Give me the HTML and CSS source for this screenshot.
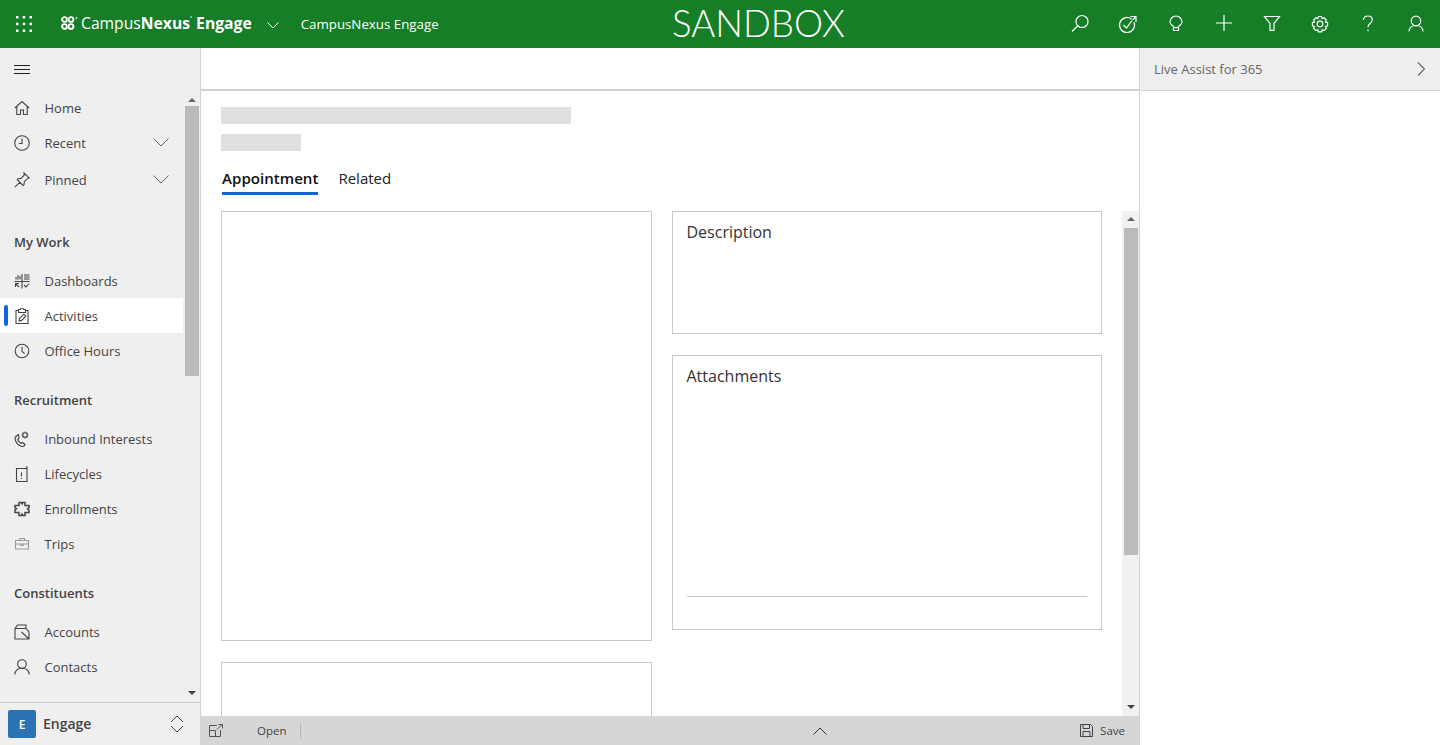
FILE: index.html
```html
<!DOCTYPE html>
<html lang="en">
<head>
    <meta charset="UTF-8">
    <meta name="viewport" content="width=device-width, initial-scale=1.0">
    <title>CampusNexus Engage</title>
    <link rel="stylesheet" href="styles.css">
</head>
<body>
    <header class="topbar">
        <svg class="waffle" width="16" height="16" viewBox="0 0 16 16" fill="#fff">
            <rect x="0" y="0" width="2.500" height="2.500"/><rect x="6.700" y="0" width="2.500" height="2.500"/><rect x="13.500" y="0" width="2.500" height="2.500"/>
            <rect x="0" y="6.700" width="2.500" height="2.500"/><rect x="6.700" y="6.700" width="2.500" height="2.500"/><rect x="13.500" y="6.700" width="2.500" height="2.500"/>
            <rect x="0" y="13.500" width="2.500" height="2.500"/><rect x="6.700" y="13.500" width="2.500" height="2.500"/><rect x="13.500" y="13.500" width="2.500" height="2.500"/>
        </svg>
        <svg class="logo-mark" width="17" height="14" viewBox="0 0 17 14" fill="none" stroke="#fff" stroke-width="1.900">
            <circle cx="3.500" cy="3.500" r="2.400"/><circle cx="10" cy="3.500" r="2.400"/><circle cx="3.500" cy="10.500" r="2.400"/><circle cx="10" cy="10.500" r="2.400"/>
            <circle cx="15.500" cy="2" r="0.600" stroke-width="1"/>
        </svg>
        <span class="logo-text">Campus<b>Nexus</b><sup>'</sup> <b>Engage</b></span>
        <svg class="logo-chevron" width="12" height="7" viewBox="0 0 12 7" fill="none" stroke="#fff"><path d="M.5.5 6 6l5.500-5.500"/></svg>
        <span class="app-name">CampusNexus Engage</span>
        <span class="sandbox">SANDBOX</span>
        <nav class="top-actions">
            <svg width="48" height="48" viewBox="0 0 48 48"><circle cx="26" cy="21.500" r="6"/><path d="M21.800 25.800 16 31.500"/></svg>
            <svg width="48" height="48" viewBox="0 0 48 48"><path d="M27.500 19A7.500 7.500 0 1 0 30 22.300"/><path d="M19.500 25l3 3 5.500-7.500"/><path d="M26.500 16.500H32V22M32 16.500l-3.500 3.500"/></svg>
            <svg width="48" height="48" viewBox="0 0 48 48"><path d="M21.500 30.500V27c0-1.300-3.500-2-3.500-5a6 6 0 0 1 12 0c0 3-3.500 3.700-3.500 5v3.500z"/><path d="M21.500 27.500h5"/></svg>
            <svg width="48" height="48" viewBox="0 0 48 48"><path d="M24 15v16M16 23h16"/></svg>
            <svg width="48" height="48" viewBox="0 0 48 48"><path d="M16.500 16.500h15L26 23.500v6.800h-4v-6.800z"/></svg>
            <svg width="48" height="48" viewBox="0 0 48 48"><circle cx="24" cy="24" r="2.800"/><path d="M22.400 16.500h3.200l.5 2.100 2-.8 2.300 2.300-.9 1.900 2.100.6v3.200l-2.100.6.900 1.900-2.300 2.300-2-.8-.5 2.100h-3.200l-.5-2.100-2 .8-2.300-2.300.9-1.900-2.100-.6v-3.200l2.100-.6-.9-1.900 2.300-2.300 2 .8z"/></svg>
            <svg width="48" height="48" viewBox="0 0 48 48"><path d="M19.500 20c0-2.500 2-4 4.500-4s4.300 1.600 4.300 3.800c0 3.500-4.300 3.500-4.300 7.500"/><path d="M24 29.500v1.800"/></svg>
            <svg width="48" height="48" viewBox="0 0 48 48"><circle cx="24" cy="21" r="4.800"/><path d="M17 31.500c.3-4 3-6 7-6s6.700 2 7 6"/></svg>
        </nav>
    </header>

    <div class="shell">
        <aside class="sidebar">
            <div class="sidebar-top">
                <svg width="16" height="10" viewBox="0 0 16 10" stroke="#222"><path d="M0 .5h16M0 4.500h16M0 8.500h16"/></svg>
            </div>
            <div class="sidebar-scroll">
                <div class="nav-list">
                    <a class="nav-item">
                        <svg class="nav-icon" viewBox="0 0 16 16"><path d="M.8 8 8 1.500 15.200 8M2.800 6.500v8h3.700V10h3v4.500h3.700v-8"/></svg>
                        <span>Home</span>
                    </a>
                    <a class="nav-item">
                        <svg class="nav-icon" viewBox="0 0 16 16"><circle cx="8" cy="8" r="7.300"/><path d="M8 3.500V8.500H4.800"/></svg>
                        <span>Recent</span>
                        <svg class="nav-chevron" width="16" height="9" viewBox="0 0 16 9"><path d="M.5.500 8 8l7.500-7.500"/></svg>
                    </a>
                    <a class="nav-item nav-item-tall">
                        <svg class="nav-icon" viewBox="0 0 16 16"><path d="M10 .8l5.200 5.200-1.600.4-3.300 3.300-.3 3.100-1 .7L3.200 7.700l.7-1 3.100-.3 3.300-3.300zM5.700 10.300.8 15.200"/></svg>
                        <span>Pinned</span>
                        <svg class="nav-chevron" width="16" height="9" viewBox="0 0 16 9"><path d="M.5.500 8 8l7.500-7.500"/></svg>
                    </a>

                    <h3 class="nav-heading nav-heading-first">My Work</h3>
                    <a class="nav-item">
                        <svg class="nav-icon" viewBox="0 0 16 16"><path d="M.5 8.500h15M8 1v14.500M2 6.500V4M4 6.500V2M6 6.500V3M10 2h5.500M10 4h5.500M10 6h5.500M1.500 10.500l3.500 3.500M1.500 14v-3.500H5M10 12l2 2 3-3.500"/></svg>
                        <span>Dashboards</span>
                    </a>
                    <a class="nav-item active">
                        <svg class="nav-icon" viewBox="0 0 16 16"><path d="M4.500 2.500H2v13h12v-13h-2.500M4.500 1.500h2a1.500 1.500 0 0 1 3 0h2V4.500h-7zM5 13l.6-2.600 4.200-4.200 2 2-4.200 4.200z"/></svg>
                        <span>Activities</span>
                    </a>
                    <a class="nav-item">
                        <svg class="nav-icon" viewBox="0 0 16 16"><circle cx="8" cy="8" r="6.800"/><path d="M8 3.800V8.500l2.600 2"/></svg>
                        <span>Office Hours</span>
                    </a>

                    <h3 class="nav-heading">Recruitment</h3>
                    <a class="nav-item">
                        <svg class="nav-icon" viewBox="0 0 16 16"><path d="M4.500 3.500C1.500 5 .5 7 1.500 9.500c1 2.800 3.300 5 6 5.800 1.500.4 3-.3 3.500-1.800l-2.500-2-1.500.8c-1.500-.7-2.800-2.200-3.300-3.800l1.300-1.200z"/><circle cx="11" cy="4" r="2.300"/><path d="M11 .5v1M11 6.500v1M7.500 4h1M13.500 4h1M8.600 1.600l.7.700M12.700 5.700l.7.700M8.600 6.400l.7-.7M12.700 2.300l.7-.7"/></svg>
                        <span>Inbound Interests</span>
                    </a>
                    <a class="nav-item">
                        <svg class="nav-icon" viewBox="0 0 16 16"><path d="M12.500 2.500H2.500v13h10.500v-15zM7.500 6.500v4M7.500 12v1"/></svg>
                        <span>Lifecycles</span>
                    </a>
                    <a class="nav-item nav-item-bold">
                        <svg class="nav-icon" viewBox="0 0 16 16"><path d="M5 1.500h2.200L8 3l.8-1.500H11v3h4v2.200L13.500 7.800 15 9v2.500h-4v3H8.800L8 13l-.8 1.500H5v-3H1V9l1.500-1.200L1 6.700V4.500h4z"/></svg>
                        <span>Enrollments</span>
                    </a>
                    <a class="nav-item nav-item-light">
                        <svg class="nav-icon" viewBox="0 0 16 16"><path d="M1.500 4.500h13v8.500h-13zM5.500 4.500v-2h5v2M1.500 8h13M7 8v1.500h2V8"/></svg>
                        <span>Trips</span>
                    </a>

                    <h3 class="nav-heading">Constituents</h3>
                    <a class="nav-item">
                        <svg class="nav-icon" viewBox="0 0 16 16"><path d="M1 15V4.500h11L15 8v7zM1 4.500 3.500 1H12v3.500M1 15h14M7.500 8 15 15"/></svg>
                        <span>Accounts</span>
                    </a>
                    <a class="nav-item">
                        <svg class="nav-icon" viewBox="0 0 16 16"><circle cx="8" cy="5" r="4.300"/><path d="M.8 15.500c.4-4 3.200-6.200 7.200-6.200s6.800 2.200 7.200 6.200"/></svg>
                        <span>Contacts</span>
                    </a>
                </div>
                <div class="scrollbar">
                    <span class="arrow arrow-up"></span>
                    <div class="thumb"></div>
                    <span class="arrow arrow-down"></span>
                </div>
            </div>
            <div class="area-switch">
                <span class="area-tile">E</span>
                <span class="area-name">Engage</span>
                <svg width="14" height="18" viewBox="0 0 14 18" fill="none" stroke="#444"><path d="M1 7 7 1l6 6M1 11l6 6 6-6"/></svg>
            </div>
        </aside>

        <main class="content">
            <div class="command-bar"></div>
            <div class="form-head">
                <div class="skeleton skeleton-title"></div>
                <div class="skeleton skeleton-sub"></div>
                <div class="tabs">
                    <span class="tab tab-active">Appointment</span>
                    <span class="tab">Related</span>
                </div>
            </div>
            <div class="form-body">
                <div class="form-grid">
                    <div class="form-col">
                        <section class="card card-main"></section>
                        <section class="card card-next"></section>
                    </div>
                    <div class="form-col">
                        <section class="card card-desc"><h2>Description</h2></section>
                        <section class="card card-attach">
                            <h2>Attachments</h2>
                            <div class="attach-rule"></div>
                        </section>
                    </div>
                </div>
                <div class="scrollbar form-scrollbar">
                    <span class="arrow arrow-up"></span>
                    <div class="thumb"></div>
                    <span class="arrow arrow-down"></span>
                </div>
            </div>
            <footer class="status-bar">
                <svg class="status-pop" width="14" height="13" viewBox="0 0 14 13" fill="none" stroke="#555"><path d="M8 1.500H.5v11h11V6M.5 6.500h6v6M8 5.500l5-5M9.500.5h4v4"/></svg>
                <span class="status-open">Open</span>
                <span class="status-sep"></span>
                <svg class="status-up" width="14" height="8" viewBox="0 0 14 8" fill="none" stroke="#333"><path d="M.5 7.500 7 1l6.500 6.500"/></svg>
                <svg class="status-save" width="13" height="13" viewBox="0 0 13 13" fill="none" stroke="#444"><path d="M.5.500h10l2 2v10H.5zM3 .5v4h6.500v-4M3 12.500V7.500h7v5"/></svg>
                <span class="status-label">Save</span>
            </footer>
        </main>

        <aside class="assist">
            <div class="assist-head">
                <span>Live Assist for 365</span>
                <svg width="8" height="14" viewBox="0 0 8 14" fill="none" stroke="#666" stroke-width="1.200"><path d="M1 .5 7.500 7 1 13.500"/></svg>
            </div>
        </aside>
    </div>
</body>
</html>
```

FILE: styles.css
```css
:root {
    --green: #157e27;
    --panel: #efefef;
    --line: #d2d2d2;
    --blue: #0f66dc;
    --text: #3b3b3b;
}
* {
    box-sizing: border-box;
}
html, body {
    height: 100%;
}
body {
    margin: 0;
    overflow: hidden;
    display: flex;
    flex-direction: column;
    font-family: "Open Sans", "Noto Sans", sans-serif;
    font-size: 13px;
    color: var(--text);
    background-color: #fff;
}

/* Top bar */
.topbar {
    position: relative;
    flex: 0 0 48px;
    display: flex;
    align-items: center;
    background-color: var(--green);
    color: #fff;
}
.waffle {
    margin-left: 16px;
}
.logo-mark {
    margin-left: 29px;
    margin-top: -3px;
}
.logo-text {
    margin-left: 3px;
    margin-top: -3px;
    font-size: 15.700px;
    white-space: nowrap;
}
.logo-text sup {
    font-size: 9px;
    line-height: 0;
}
.logo-chevron {
    margin-left: 15px;
    margin-top: 3px;
}
.app-name {
    margin-left: 22px;
    font-size: 13.300px;
    white-space: nowrap;
}
.sandbox {
    position: absolute;
    left: 672px;
    top: -1px;
    font-family: "Lato", sans-serif;
    font-weight: 300;
    font-size: 36.700px;
    line-height: 48px;
}
.top-actions {
    margin-left: auto;
    display: flex;
}
.top-actions svg {
    display: block;
    fill: none;
    stroke: #fff;
    stroke-width: 1.200;
}

/* Page shell */
.shell {
    flex: 1;
    min-height: 0;
    display: flex;
}

/* Sidebar */
.sidebar {
    flex: 0 0 201px;
    display: flex;
    flex-direction: column;
    background-color: var(--panel);
    border-right: 1px solid var(--line);
}
.sidebar-top {
    flex: 0 0 42px;
    display: flex;
    align-items: center;
    padding: 2px 0 0 14px;
}
.sidebar-scroll {
    flex: 1;
    min-height: 0;
    display: flex;
}
.nav-list {
    flex: 1;
    min-width: 0;
    margin-right: 1px;
}
.nav-item {
    position: relative;
    display: flex;
    align-items: center;
    height: 35px;
    padding: 0 14px 0 14px;
    font-size: 13px;
    color: #444;
}
.nav-item span {
    margin-left: 0.500px;
}
.nav-item-tall {
    height: 39px;
}
.nav-item.active {
    background-color: #fff;
}
.nav-item.active::before {
    content: "";
    position: absolute;
    left: 4px;
    top: 7px;
    bottom: 7px;
    width: 4px;
    border-radius: 2px;
    background-color: var(--blue);
}
.nav-icon {
    flex: 0 0 16px;
    width: 16px;
    height: 16px;
    margin-right: 14px;
    fill: none;
    stroke: #444;
    stroke-width: 1.100;
}
.nav-item-light .nav-icon {
    stroke: #999;
}
.nav-item-bold .nav-icon {
    stroke-width: 1.500;
}
.nav-chevron {
    margin-left: auto;
    fill: none;
    stroke: #666;
}
.nav-heading {
    margin: 19px 0 0;
    height: 34px;
    line-height: 27px;
    padding-left: 14px;
    font-size: 13px;
    font-weight: 600;
    color: #444;
}
.nav-heading-first {
    margin-top: 30px;
}
.scrollbar {
    flex: 0 0 16px;
    display: flex;
    flex-direction: column;
    align-items: center;
}
.scrollbar .thumb {
    width: 14px;
}
.sidebar-scroll .scrollbar {
    padding: 8px 0 7px;
}
.thumb {
    background-color: #bbb;
}
.sidebar-scroll .thumb {
    height: 270px;
    margin-top: 4px;
}
.arrow {
    width: 0;
    height: 0;
    border-left: 4px solid transparent;
    border-right: 4px solid transparent;
}
.arrow-up {
    border-bottom: 4px solid #666;
}
.arrow-down {
    margin-top: auto;
    border-top: 4px solid #444;
}
.area-switch {
    flex: 0 0 43px;
    display: flex;
    align-items: center;
    padding: 0 16px 0 8px;
    border-top: 1px solid var(--line);
}
.area-tile {
    width: 28px;
    height: 28px;
    display: flex;
    align-items: center;
    justify-content: center;
    border-radius: 2px;
    background-color: #2b72b2;
    color: #fff;
    font-size: 12px;
    font-weight: 600;
}
.area-name {
    margin-left: 7px;
    margin-top: -2px;
    font-size: 14px;
    font-weight: 600;
    color: #444;
}
.area-switch svg {
    margin-left: auto;
}

/* Main form */
.content {
    flex: 1;
    min-width: 0;
    display: flex;
    flex-direction: column;
}
.command-bar {
    flex: 0 0 43px;
    border-bottom: 2px solid var(--line);
}
.form-head {
    flex: 0 0 120px;
    padding: 16px 20px 0;
}
.skeleton {
    background-color: #e1e0df;
    height: 17px;
}
.skeleton-title {
    width: 350px;
}
.skeleton-sub {
    width: 80px;
    margin-top: 10px;
}
.tabs {
    display: flex;
    gap: 20px;
    margin-top: 17px;
    padding-left: 1px;
}
.tab {
    height: 27px;
    font-size: 15px;
    line-height: 20px;
    color: #222;
}
.tab-active {
    font-size: 15.100px;
    font-weight: 600;
    color: #111;
    border-bottom: 3px solid var(--blue);
}
.form-body {
    flex: 1;
    min-height: 0;
    overflow: hidden;
    display: flex;
    padding-left: 20px;
}
.form-grid {
    flex: 0 0 881px;
    display: grid;
    grid-template-columns: 431px 430px;
    gap: 20px;
    align-items: start;
}
.form-col {
    display: flex;
    flex-direction: column;
    gap: 21px;
}
.card {
    border: 1px solid #c8c8c8;
    padding: 9px 14px 10px 13.500px;
}
.card h2 {
    margin: 0;
    font-size: 16px;
    font-weight: 400;
    line-height: 22px;
    color: #333;
}
.card-main {
    height: 430px;
}
.card-next {
    height: 120px;
}
.card-desc {
    height: 123px;
}
.card-attach {
    height: 275px;
    display: flex;
    flex-direction: column;
}
.attach-rule {
    margin-top: auto;
    margin-bottom: 22px;
    border-top: 1px solid #c8c8c8;
}
.form-scrollbar {
    margin-left: 20px;
    flex: 0 0 17px;
    padding: 6px 0 7px;
    background-color: #f1f1f1;
}
.form-scrollbar .thumb {
    height: 327px;
    margin-top: 7px;
}
.status-bar {
    flex: 0 0 29px;
    display: flex;
    align-items: center;
    padding: 0 14px 0 8px;
    background-color: #d6d6d6;
    font-size: 11.500px;
    color: #444;
}
.status-open {
    margin-left: 34px;
}
.status-sep {
    width: 1px;
    height: 16px;
    margin-left: 13px;
    background-color: #b5b5b5;
}
.status-up {
    margin-left: 512px;
}
.status-save {
    margin-left: auto;
}
.status-label {
    margin-left: 7px;
}

/* Right panel */
.assist {
    flex: 0 0 301px;
    border-left: 1px solid var(--line);
}
.assist-head {
    height: 43px;
    display: flex;
    align-items: center;
    justify-content: space-between;
    padding: 0 15px 0 14px;
    background-color: var(--panel);
    border-bottom: 1px solid var(--line);
    font-size: 13px;
    color: #666;
}
```
